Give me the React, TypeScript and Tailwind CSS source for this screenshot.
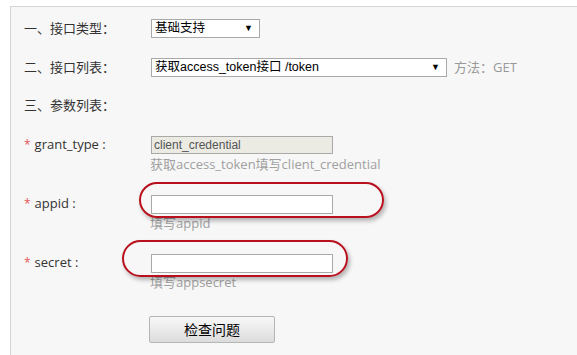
import React from "react";

const cjk = '"Noto Sans CJK SC", sans-serif';
const labelFont = { fontFamily: '"Open Sans", "Noto Sans CJK SC", sans-serif' };
const arialFont = { fontFamily: '"Liberation Sans", "Noto Sans CJK SC", sans-serif' };

function Select({ text, width }: { text: string; width: string }) {
  return (
    <div
      className={`h-[19px] ${width} border border-[#a9a9a9] bg-white flex items-center justify-between pl-[3px] pr-[6px] text-[12.5px] text-black leading-none`}
      style={arialFont}
    >
      <span>{text}</span>
      <span className="text-[9px]">▼</span>
    </div>
  );
}

function Label({ children, req }: { children: React.ReactNode; req?: boolean }) {
  return (
    <div className="w-[127px] shrink-0 text-[13px] text-[#333] flex items-center" style={labelFont}>
      {req && <span className="text-[#e05a5a] mr-[4px] text-[12px]">*</span>}
      {children}
    </div>
  );
}

export default function App() {
  return (
    <div className="w-[577px] h-[355px] bg-white overflow-hidden relative" style={{ fontFamily: cjk }}>
      <div className="mt-[6px] ml-[10px] h-[349px] bg-[#f7f7f7] border-t border-l border-[#d4d4d4] pl-[13px] pt-[12px]">
        <div className="flex items-center h-[19px]">
          <Label>一、接口类型：</Label>
          <Select text="基础支持" width="w-[109px]" />
        </div>
        <div className="flex items-center h-[19px] mt-[20px]">
          <Label>二、接口列表：</Label>
          <Select text="获取access_token接口 /token" width="w-[296px]" />
          <span className="ml-[7px] text-[13px] text-[#999]" style={labelFont}>方法：GET</span>
        </div>
        <div className="flex items-center h-[18px] mt-[20px]">
          <Label>三、参数列表：</Label>
        </div>

        <div className="flex items-center h-[18px] mt-[21px]">
          <Label req>grant_type :</Label>
          <div
            className="w-[182px] h-[18px] border border-[#a9a9a9] bg-[#ebebe4] text-[12px] text-[#555] flex items-center pl-[2px]"
            style={arialFont}
          >
            client_credential
          </div>
        </div>
        <div className="pl-[126px] h-[18px] mt-[1px] text-[13px] text-[#a0a0a0] leading-[18px]" style={labelFont}>
          获取access_token填写client_credential
        </div>

        <div className="flex items-center h-[18px] mt-[22px]">
          <Label req>appid :</Label>
          <div className="w-[182px] h-[19px] border border-[#a9a9a9] bg-white" />
        </div>
        <div className="pl-[126px] h-[18px] mt-[1px] text-[13px] text-[#a0a0a0] leading-[18px]" style={labelFont}>
          填写appid
        </div>

        <div className="flex items-center h-[18px] mt-[22px]">
          <Label req>secret :</Label>
          <div className="w-[182px] h-[19px] border border-[#a9a9a9] bg-white" />
        </div>
        <div className="pl-[126px] h-[18px] mt-[1px] text-[13px] text-[#a0a0a0] leading-[18px]" style={labelFont}>
          填写appsecret
        </div>

        <div className="pl-[125px] mt-[25px]">
          <button
            className="w-[126px] h-[27px] border border-[#b5b5b5] rounded-[2px] bg-gradient-to-b from-[#f8f8f8] to-[#dcdcdc] text-[14px] text-black"
            style={{ fontFamily: cjk }}
          >
            检查问题
          </button>
        </div>
      </div>

      <div
        className="absolute left-[139px] top-[182px] w-[245px] h-[36px] rounded-full border-2 border-[#b8101c]"
        style={{ boxShadow: "2px 3px 4px rgba(0,0,0,0.28)" }}
      />
      <div
        className="absolute left-[122px] top-[240px] w-[226px] h-[37px] rounded-full border-2 border-[#b8101c]"
        style={{ boxShadow: "2px 3px 4px rgba(0,0,0,0.28)" }}
      />
    </div>
  );
}
